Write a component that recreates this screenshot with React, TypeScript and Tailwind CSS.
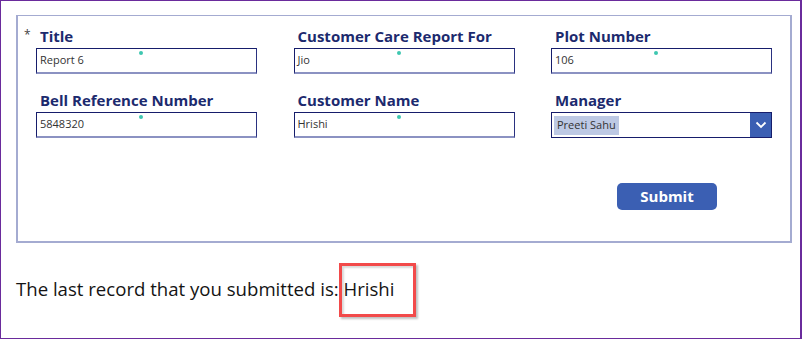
import React from "react";

const font = { fontFamily: '"Open Sans", "Noto Sans", sans-serif' };

function Field({ label, value, star }: { label: string; value: string; star?: boolean }) {
  return (
    <div className="flex flex-col">
      <div className="relative h-[20px] pl-[4px] text-[15px] leading-[20px] font-bold text-[#1c2a6e]">
        {star && (
          <span className="absolute left-[-12px] top-[-1px] text-[12px] font-normal text-[#444]">*</span>
        )}
        {label}
      </div>
      <div className="relative mt-[2px] flex h-[26px] items-center border border-[#161d6b] border-b-2 border-b-[#8b92c2] border-r-[#2a3180] bg-white pl-[3px] text-[11px] text-[#333]">
        {value}
        <span className="absolute left-[102px] top-[2px] h-[4px] w-[4px] rounded-full bg-[#3ec7b0]" />
      </div>
    </div>
  );
}

function Dropdown({ label, value }: { label: string; value: string }) {
  return (
    <div className="flex flex-col">
      <div className="h-[20px] pl-[4px] text-[15px] leading-[20px] font-bold text-[#1c2a6e]">{label}</div>
      <div className="mt-[2px] flex h-[26px] items-stretch border border-[#161d6b] bg-white">
        <div className="flex flex-1 items-center pl-[2px]">
          <span className="flex h-[19px] items-center bg-[#bdc9e4] px-[3px] text-[11px] text-[#333]">{value}</span>
        </div>
        <div className="flex w-[21px] items-center justify-center bg-[#3b5fb3]">
          <svg width="12" height="8" viewBox="0 0 12 8">
            <path d="M1.5 1.5 L6 6 L10.5 1.5" fill="none" stroke="#fff" strokeWidth="1.8" />
          </svg>
        </div>
      </div>
    </div>
  );
}

export default function App() {
  return (
    <div className="relative h-[339px] w-[802px] border border-r-2 border-[#6a2b9c] bg-white" style={font}>
      <div className="ml-[15px] mt-[14px] h-[228px] w-[776px] border-2 border-t border-[#a4abd1] pt-[10px] pl-[18px]">
        <div className="grid grid-cols-[221px_221px_221px] gap-x-[36.5px] gap-y-[16px]">
          <Field label="Title" value="Report 6" star />
          <Field label="Customer Care Report For" value="Jio" />
          <Field label="Plot Number" value="106" />
          <Field label="Bell Reference Number" value="5848320" />
          <Field label="Customer Name" value="Hrishi" />
          <Dropdown label="Manager" value="Preeti Sahu" />
        </div>
        <div className="mt-[45px] flex justify-end pr-[73px]">
          <button className="h-[27px] w-[100px] rounded-[5px] bg-[#3b5fb3] text-[15px] font-bold text-white">
            Submit
          </button>
        </div>
      </div>
      <div className="ml-[15px] mt-[33px] text-[18.6px] leading-[26px] text-[#141414]">
        The last record that you submitted is: Hrishi
      </div>
      <div className="absolute left-[338px] top-[262px] h-[54px] w-[77px] border-[3px] border-[#f24a4a] shadow-[2px_2px_2px_rgba(0,0,0,0.25),inset_2px_2px_2px_rgba(0,0,0,0.15)]" />
    </div>
  );
}
